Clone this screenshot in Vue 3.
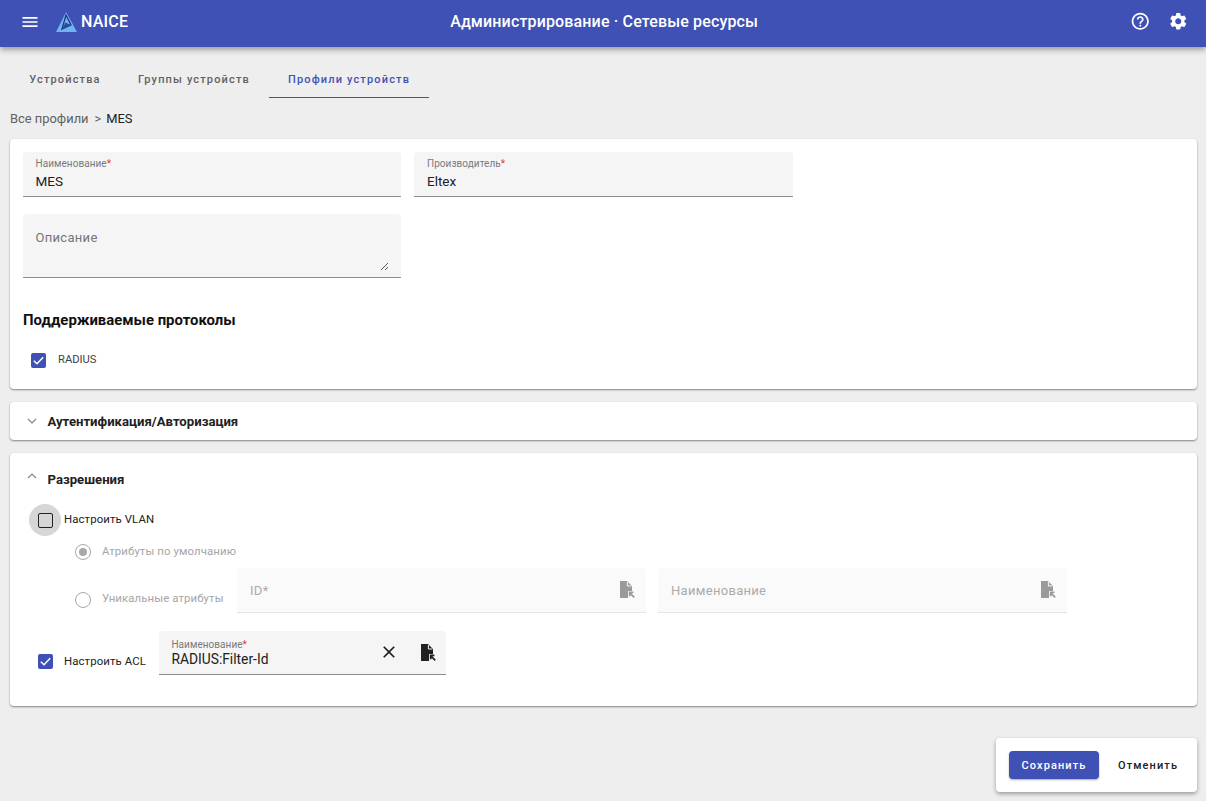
<script setup>
const tabs = [
  { label: 'Устройства', cls: 'first' },
  { label: 'Группы устройств', cls: 'second' },
  { label: 'Профили устройств', cls: 'active' }
]
const menuPath = 'M3 18h18v-2H3v2zm0-5h18v-2H3v2zm0-7v2h18V6H3z'
const helpPath = 'M11 18h2v-2h-2v2zm1-16C6.48 2 2 6.48 2 12s4.48 10 10 10 10-4.48 10-10S17.52 2 12 2zm0 18c-4.41 0-8-3.59-8-8s3.59-8 8-8 8 3.59 8 8-3.59 8-8 8zm0-14c-2.21 0-4 1.79-4 4h2c0-1.1.9-2 2-2s2 .9 2 2c0 2-3 1.75-3 5h2c0-2.25 3-2.5 3-5 0-2.21-1.79-4-4-4z'
const gearPath = 'M19.14 12.94c.04-.3.06-.61.06-.94 0-.32-.02-.64-.07-.94l2.03-1.58c.18-.14.23-.41.12-.61l-1.92-3.32c-.12-.22-.37-.29-.59-.22l-2.39.96c-.5-.38-1.03-.7-1.62-.94l-.36-2.54c-.04-.24-.24-.41-.48-.41h-3.84c-.24 0-.43.17-.47.41l-.36 2.54c-.59.24-1.13.57-1.62.94l-2.39-.96c-.22-.08-.47 0-.59.22L2.74 8.87c-.12.21-.08.47.12.61l2.03 1.58c-.05.3-.09.63-.09.94s.02.64.07.94l-2.03 1.58c-.18.14-.23.41-.12.61l1.92 3.32c.12.22.37.29.59.22l2.39-.96c.5.38 1.03.7 1.62.94l.36 2.54c.05.24.24.41.48.41h3.84c.24 0 .44-.17.47-.41l.36-2.54c.59-.24 1.13-.56 1.62-.94l2.39.96c.22.08.47 0 .59-.22l1.92-3.32c.12-.22.07-.47-.12-.61l-2.01-1.58zM12 15.6c-1.98 0-3.6-1.62-3.6-3.6s1.62-3.6 3.6-3.6 3.6 1.62 3.6 3.6-1.62 3.6-3.6 3.6z'
const closePath = 'M19 6.41L17.59 5 12 10.59 6.41 5 5 6.41 10.59 12 5 17.59 6.41 19 12 13.41 17.59 19 19 17.59 13.41 12z'
</script>

<template>
  <div class="page">
    <header class="topbar">
      <div class="brand">
        <svg class="menu-icon" viewBox="0 0 24 24" width="20" height="20"><path :d="menuPath" fill="#fff" /></svg>
        <svg class="logo" viewBox="0 0 21 20" width="21" height="20">
          <path d="M10 0 L21 20 H0 Z" fill="#6fb4f2" />
          <path d="M10 3 L15 13 L6 17 Z" fill="none" stroke="#27337f" stroke-width="1.3" />
          <path d="M6 17 L9.5 10.5 L15 13 Z" fill="#2f4aa0" />
        </svg>
        <span class="brand-name">NAICE</span>
      </div>
      <div class="title">Администрирование · Сетевые ресурсы</div>
      <div class="actions">
        <svg viewBox="0 0 24 24" width="20.5" height="20.5"><path :d="helpPath" fill="#fff" /></svg>
        <svg viewBox="0 0 24 24" width="20.5" height="20.5"><path :d="gearPath" fill="#fff" /></svg>
      </div>
    </header>

    <nav class="tabs">
      <div v-for="t in tabs" :key="t.label" class="tab" :class="t.cls">{{ t.label }}</div>
    </nav>

    <div class="crumbs"><span>Все профили</span><span class="sep">&gt;</span><span class="current">MES</span></div>

    <section class="card main">
      <div class="row">
        <div class="field filled">
          <div class="float">Наименование<i>*</i></div>
          <div class="value">MES</div>
        </div>
        <div class="field filled wide">
          <div class="float">Производитель<i>*</i></div>
          <div class="value">Eltex</div>
        </div>
      </div>
      <div class="field area">
        <span>Описание</span>
        <svg class="grip" viewBox="0 0 9 9" width="9" height="9"><path d="M1 8 L8 1 M5 8 L8 5" stroke="#555" stroke-width="1" fill="none" /></svg>
      </div>
      <h3 class="protocols">Поддерживаемые протоколы</h3>
      <label class="radius">
        <span class="check on"><svg viewBox="0 0 16 16" width="15" height="15"><path d="M3 8.3 L6.4 11.5 L13 4.6" stroke="#fff" stroke-width="1.6" fill="none" /></svg></span>
        <span class="radius-label">RADIUS</span>
      </label>
    </section>

    <section class="card panel-closed">
      <svg class="chev" viewBox="0 0 10 6" width="10" height="6"><path d="M1 1 L5 5 L9 1" stroke="#858585" stroke-width="1.2" fill="none" /></svg>
      <span class="panel-title">Аутентификация/Авторизация</span>
    </section>

    <section class="card panel-open">
      <div class="panel-head">
        <svg class="chev" viewBox="0 0 10 6" width="10" height="6"><path d="M1 5 L5 1 L9 5" stroke="#858585" stroke-width="1.2" fill="none" /></svg>
        <span class="panel-title">Разрешения</span>
      </div>

      <label class="vlan">
        <span class="halo"><span class="check"></span></span>
        <span class="opt-label">Настроить VLAN</span>
      </label>

      <div class="radio-row default">
        <span class="radio sel"></span>
        <span class="radio-label">Атрибуты по умолчанию</span>
      </div>

      <div class="radio-row unique">
        <span class="radio"></span>
        <span class="radio-label">Уникальные атрибуты</span>
        <div class="field disabled id">
          <span>ID*</span>
          <svg class="file" viewBox="0 0 16 18" width="16" height="18"><path d="M1 0 H8 L13 5 V10 H9 V17 H1 Z" fill="#9a9a9a" /><path d="M8.4 1 V5 H12.4" fill="none" stroke="#fafafa" stroke-width="1" /><path d="M11 12 L15.2 16.4 M10.7 15.2 V11.4 H14.4" stroke="#9a9a9a" stroke-width="1.8" fill="none" /></svg>
        </div>
        <div class="field disabled name">
          <span>Наименование</span>
          <svg class="file" viewBox="0 0 16 18" width="16" height="18"><path d="M1 0 H8 L13 5 V10 H9 V17 H1 Z" fill="#9a9a9a" /><path d="M8.4 1 V5 H12.4" fill="none" stroke="#fafafa" stroke-width="1" /><path d="M11 12 L15.2 16.4 M10.7 15.2 V11.4 H14.4" stroke="#9a9a9a" stroke-width="1.8" fill="none" /></svg>
        </div>
      </div>

      <div class="acl">
        <span class="check on acl-check"><svg viewBox="0 0 16 16" width="15" height="15"><path d="M3 8.3 L6.4 11.5 L13 4.6" stroke="#fff" stroke-width="1.6" fill="none" /></svg></span>
        <span class="opt-label">Настроить ACL</span>
        <div class="field filled acl-field">
          <div class="acl-text">
            <div class="float">Наименование<i>*</i></div>
            <div class="value">RADIUS:Filter-Id</div>
          </div>
          <svg class="x" viewBox="0 0 24 24" width="20" height="20"><path :d="closePath" fill="#212121" /></svg>
          <svg class="file" viewBox="0 0 16 18" width="16" height="18"><path d="M1 0 H8 L13 5 V10 H9 V17 H1 Z" fill="#212121" /><path d="M8.4 1 V5 H12.4" fill="none" stroke="#f5f5f5" stroke-width="1" /><path d="M11 12 L15.2 16.4 M10.7 15.2 V11.4 H14.4" stroke="#212121" stroke-width="1.8" fill="none" /></svg>
        </div>
      </div>
    </section>

    <div class="footer">
      <div class="footer-card">
        <button class="btn save">Сохранить</button>
        <button class="btn cancel">Отменить</button>
      </div>
    </div>
  </div>
</template>

<style>
html, body { margin: 0; background: #eeeeee; }
</style>

<style scoped>
.page {
  width: 1206px;
  height: 801px;
  overflow: hidden;
  background: #eeeeee;
  font-family: Roboto, "Noto Sans", sans-serif;
  color: #212121;
}
.topbar {
  height: 47px;
  box-sizing: border-box;
  padding-bottom: 4px;
  background: #3f51b5;
  display: flex;
  align-items: center;
  position: relative;
  box-shadow: 0 2px 4px -1px rgba(0,0,0,.2), 0 4px 5px 0 rgba(0,0,0,.14), 0 1px 10px 0 rgba(0,0,0,.12);
}
.brand { display: flex; align-items: center; flex: 1; padding-left: 20px; }
.menu-icon { margin-right: 16px; }
.logo { margin-right: 4px; margin-top: 1px; }
.brand-name { color: #fff; font-size: 16px; font-weight: 500; letter-spacing: .2px; }
.title { color: #fff; font-size: 16px; font-weight: 500; text-align: center; letter-spacing: .15px; }
.actions { flex: 1; display: flex; justify-content: flex-end; gap: 17.5px; padding-right: 17.75px; align-items: center; }

.tabs { display: flex; padding: 13px 0 0 10px; height: 38px; }
.tab {
  width: 160px;
  height: 37px;
  padding-top: 2px;
  box-sizing: border-box;
  display: flex;
  align-items: center;
  justify-content: center;
  font-size: 11px;
  font-weight: 500;
  letter-spacing: 1.15px;
  color: #616161;
}
.tab.first { width: 110px; }
.tab.second { width: 148px; margin-right: 1px; }
.tab.active { color: #3f51b5; height: 38px; border-bottom: 1px solid #3f51b5; }

.crumbs { margin: 12px 0 0 10px; height: 18px; line-height: 18px; font-size: 12.9px; color: #616161; display: flex; }
.sep { margin: 0 5px 0 6px; }
.current { color: #212121; }

.card {
  background: #fff;
  margin: 0 9px 0 10px;
  border-radius: 4px;
  box-shadow: 0 1px 2px rgba(0,0,0,.45);
}
.main { margin-top: 11px; height: 250px; padding: 13px 13px 0; box-sizing: border-box; }
.row { display: flex; gap: 13px; }
.field {
  background: #f5f5f5;
  border-radius: 4px 4px 0 0;
  border-bottom: 1px solid #8c8c8c;
  box-sizing: border-box;
}
.filled { width: 378px; height: 45px; padding: 6px 12.5px 0; }
.filled.wide { width: 379px; padding-left: 13px; }
.float { font-size: 10px; line-height: 12px; color: #7a7a7a; letter-spacing: .05px; }
.float i { color: #e53935; font-style: normal; }
.value { font-size: 13.5px; line-height: 20px; color: #212121; margin-top: 1px; }
.area {
  width: 378px;
  height: 64px;
  margin-top: 17px;
  padding: 16px 12.5px 0;
  font-size: 13px;
  line-height: 16px;
  color: #757575;
  letter-spacing: .3px;
  position: relative;
}
.grip { position: absolute; right: 12px; bottom: 6px; }
.protocols { margin: 32px 0 0; font-size: 14.9px; line-height: 20px; font-weight: 700; color: #111; }
.radius { display: flex; align-items: center; margin: 23px 0 0 8px; font-size: 11.2px; color: #424242; gap: 12px; }
.radius-label { padding-bottom: 2px; }

.check {
  width: 15px;
  height: 15px;
  box-sizing: border-box;
  border: 1.5px solid #212121;
  border-radius: 2px;
  display: block;
  flex: none;
}
.check.on { background: #3f51b5; border: none; }
.check svg { display: block; }

.panel-closed { margin-top: 13px; height: 38px; display: flex; align-items: center; padding-left: 16.5px; }
.panel-open { margin-top: 13px; height: 253px; padding-top: 1px; box-sizing: border-box; }
.panel-head { display: flex; align-items: center; height: 50px; padding-left: 16.5px; }
.chev { margin-right: 11px; }
.panel-title { font-size: 13.15px; font-weight: 700; color: #212121; }
.panel-head .chev { margin-top: -6px; }

.vlan { display: flex; align-items: center; height: 32px; margin: 0 0 0 19px; }
.halo {
  width: 32px;
  height: 32px;
  border-radius: 50%;
  background: #d6d6d6;
  display: flex;
  align-items: center;
  justify-content: center;
  margin-right: 3px;
}
.opt-label { font-size: 11.4px; color: #212121; letter-spacing: .1px; padding-bottom: 2px; }

.radio-row { display: flex; align-items: center; margin-left: 65px; }
.radio-row.default { height: 16px; margin-top: 8px; }
.radio-row.unique { height: 45px; margin-top: 8px; }
.radio {
  width: 16px;
  height: 16px;
  box-sizing: border-box;
  border: 1.3px solid #a8a8a8;
  border-radius: 50%;
  flex: none;
  position: relative;
  margin-right: 11px;
}
.radio.sel::after {
  content: "";
  position: absolute;
  left: 3px;
  top: 3px;
  width: 8px;
  height: 8px;
  border-radius: 50%;
  background: #a8a8a8;
}
.radio-label { font-size: 11.4px; color: #a6a6a6; letter-spacing: .1px; width: 135px; flex: none; padding-bottom: 2px; }
.unique .radio { margin-top: 18px; }
.unique .radio-label { margin-top: 16px; }
.disabled {
  background: #fafafa;
  border-bottom: 1px solid #e4e4e4;
  height: 45px;
  display: flex;
  align-items: center;
  justify-content: space-between;
  padding: 0 11px 0 13px;
  font-size: 13px;
  letter-spacing: .3px;
  color: #ababab;
  flex: none;
}
.id { width: 409px; margin-right: 12px; }
.name { width: 409px; }

.acl { display: flex; align-items: center; margin: 18px 0 0 28px; }
.acl-check { margin-top: 16px; width: 15px; }
.acl .opt-label { margin-left: 11px; margin-right: 13px; margin-top: 18px; }
.acl-field { width: 287px; height: 44px; padding-top: 8px; display: flex; align-items: flex-start; }
.acl-text { flex: 1; }
.acl-text .value { font-size: 13.8px; margin-top: -2px; }
.x { margin: 3px 21.5px 0 0; }
.acl-field .file { margin: 5px -3px 0 0; }

.footer { display: flex; justify-content: flex-end; padding: 32px 9px 0 0; }
.footer-card {
  width: 201px;
  height: 54px;
  background: #fff;
  border-radius: 4px;
  box-shadow: 0 2px 4px rgba(0,0,0,.35);
  display: flex;
  align-items: center;
  padding-left: 13px;
  box-sizing: border-box;
}
.btn {
  font-family: Roboto, sans-serif;
  font-size: 11px;
  font-weight: 500;
  letter-spacing: 1.1px;
  border: none;
  background: none;
  padding: 0;
  height: 28px;
  border-radius: 4px;
}
.save { width: 90px; background: #3f51b5; color: #fff; box-shadow: 0 1px 2px rgba(0,0,0,.35); }
.cancel { color: #212121; margin-left: 19px; }
</style>
